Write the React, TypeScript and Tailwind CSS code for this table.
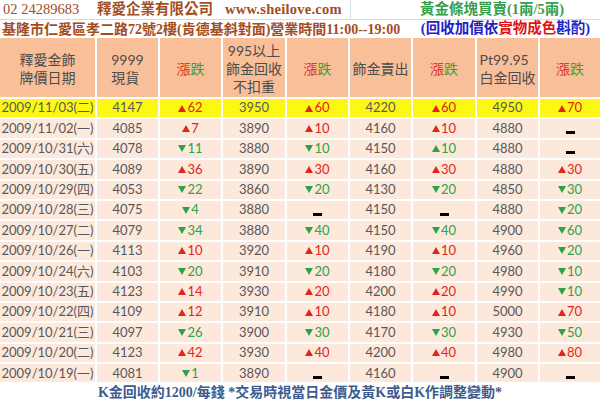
import React from "react";

type Row = [string, number, string, number, string, number, string, number, string];

// "+n" red up, "-n" green down, "^n" green up, "" no change
const rows: Row[] = [
  ["2009/11/03(二)", 4147, "+62", 3950, "+60", 4220, "+60", 4950, "+70"],
  ["2009/11/02(一)", 4085, "+7", 3890, "+10", 4160, "+10", 4880, ""],
  ["2009/10/31(六)", 4078, "-11", 3880, "-10", 4150, "^10", 4880, ""],
  ["2009/10/30(五)", 4089, "+36", 3890, "+30", 4160, "+30", 4880, "+30"],
  ["2009/10/29(四)", 4053, "-22", 3860, "-20", 4130, "-20", 4850, "-30"],
  ["2009/10/28(三)", 4075, "-4", 3880, "", 4150, "", 4880, "-20"],
  ["2009/10/27(二)", 4079, "-34", 3880, "-40", 4150, "-40", 4900, "-60"],
  ["2009/10/26(一)", 4113, "+10", 3920, "+10", 4190, "+10", 4960, "-20"],
  ["2009/10/24(六)", 4103, "-20", 3910, "-20", 4180, "-20", 4980, "-10"],
  ["2009/10/23(五)", 4123, "+14", 3930, "+20", 4200, "+20", 4990, "-10"],
  ["2009/10/22(四)", 4109, "+12", 3910, "+10", 4180, "+10", 5000, "+70"],
  ["2009/10/21(三)", 4097, "-26", 3900, "-30", 4170, "-30", 4930, "-50"],
  ["2009/10/20(二)", 4123, "+42", 3930, "+40", 4200, "+40", 4980, "+80"],
  ["2009/10/19(一)", 4081, "-1", 3890, "", 4160, "", 4900, ""],
];

function Change({ v }: { v: string }) {
  if (v === "") {
    return <span className="block h-[3px] w-[9px] translate-y-[4px] bg-black" />;
  }
  const kind = v[0];
  const n = v.slice(1);
  const red = kind === "+";
  const up = kind !== "-";
  return (
    <span
      className={`flex items-center ${red ? "text-[#e1251b]" : "text-[#2aa34a]"}`}
    >
      <svg width="8" height="7" viewBox="0 0 8 7" className="mr-[1px]">
        <polygon
          points={up ? "4,0 8,7 0,7" : "0,0 8,0 4,7"}
          className={red ? "fill-[#e1251b]" : "fill-[#2aa34a]"}
        />
      </svg>
      {n}
    </span>
  );
}

function UpDown() {
  return (
    <span>
      <span className="text-[#d8382c]">漲</span>
      <span className="text-[#3c9e3c]">跌</span>
    </span>
  );
}

function Head({ children, className = "" }: { children: React.ReactNode; className?: string }) {
  return (
    <div
      className={`flex items-center justify-center overflow-hidden bg-[#f9bf98] pt-[3px] text-[14px] leading-[18px] text-[#4d4d4d] ${className}`}
    >
      {children}
    </div>
  );
}

export default function App() {
  return (
    <div className="flex h-[401px] w-[600px] flex-col overflow-hidden bg-white font-['Lato','Noto_Sans_CJK_TC',sans-serif]">
      <div className="font-['Liberation_Serif','Noto_Sans_CJK_TC',serif]">
        <div className="flex h-[20px] border-b border-[#d6dbe2]">
          <div className="flex w-[350px] items-center pl-[3px] text-[14.5px] text-[#a34d1f]">
            <span className="w-[94px]">02 24289683</span>
            <span className="w-[128px] font-bold">釋愛企業有限公司</span>
            <span className="font-bold tracking-[0.25px]">www.sheilove.com</span>
          </div>
          <div className="flex flex-1 items-center border-l border-[#d6dbe2] pl-[69px] text-[14.5px] font-bold text-[#35a04c]">
            黃金條塊買賣(1兩/5兩)
          </div>
        </div>
        <div className="flex h-[18px] items-center justify-between pl-[2px] pr-[10px] text-[14px] font-bold">
          <span className="text-[#a34d1f]">
            基隆市仁愛區孝二路72號2樓(肯德基斜對面)營業時間11:00--19:00
          </span>
          <span className="text-[14.5px] text-[#1f22c4]">
            (回收加價依<span className="text-[#e01414]">實物成色</span>斟酌)
          </span>
        </div>
      </div>

      <div className="grid grid-cols-[95px_61px_61px_62px_61px_61px_62px_61px_60px] grid-rows-[59px_repeat(14,18.4px)] gap-x-[2px] gap-y-[2px] bg-white">
        <Head>
          <span className="text-center">
            釋愛金飾
            <br />
            牌價日期
          </span>
        </Head>
        <Head>
          <span className="text-left">
            9999
            <br />
            現貨
          </span>
        </Head>
        <Head>
          <UpDown />
        </Head>
        <Head className="items-start pt-[4px]">
          <span className="text-center">
            995以上
            <br />
            飾金回收
            <br />
            不扣重
          </span>
        </Head>
        <Head>
          <UpDown />
        </Head>
        <Head>飾金賣出</Head>
        <Head>
          <UpDown />
        </Head>
        <Head>
          <span className="text-left">
            Pt99.95
            <br />
            白金回收
          </span>
        </Head>
        <Head>
          <UpDown />
        </Head>

        {rows.map((r, i) => {
          const bg = i === 0 ? "bg-[#fcf814]" : "bg-[#fde8dc]";
          const cell = `flex items-center justify-center text-[13px] text-[#58585a] ${bg}`;
          return (
            <React.Fragment key={r[0]}>
              <div className={cell}>{r[0]}</div>
              <div className={cell}>{r[1]}</div>
              <div className={cell}>
                <Change v={r[2]} />
              </div>
              <div className={cell}>{r[3]}</div>
              <div className={cell}>
                <Change v={r[4]} />
              </div>
              <div className={cell}>{r[5]}</div>
              <div className={cell}>
                <Change v={r[6]} />
              </div>
              <div className={cell}>{r[7]}</div>
              <div className={cell}>
                <Change v={r[8]} />
              </div>
            </React.Fragment>
          );
        })}
      </div>

      <div className="flex flex-1 items-center justify-center font-['Liberation_Serif','Noto_Sans_CJK_TC',serif] text-[14px] font-bold text-[#3d5c8c]">
        K金回收約1200/每錢 *交易時視當日金價及黃K或白K作調整變動*
      </div>
    </div>
  );
}
